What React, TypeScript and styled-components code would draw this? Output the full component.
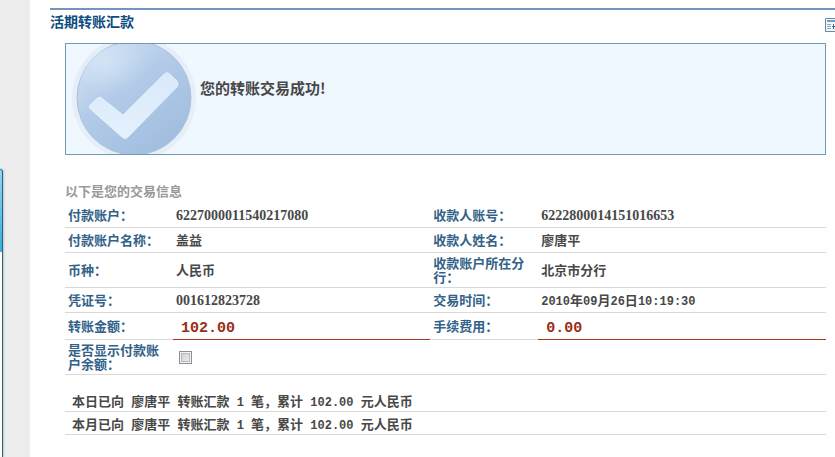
import React from "react";
import styled, { createGlobalStyle } from "styled-components";

const GlobalStyle = createGlobalStyle`
  * { box-sizing: border-box; }
  body {
    margin: 0;
    background: #fff;
    color: #484848;
    font: 700 13px/14px "Noto Sans CJK SC", sans-serif;
  }
`;

const Page = styled.div`
  display: flex;
  min-height: 100vh;
  overflow: hidden;
`;

const Rail = styled.aside`
  flex: 0 0 30px;
  display: flex;
  padding-top: 169px;
  background: #ededed;
`;

const DockedPanel = styled.div`
  width: 3px;
  border-top: 1px solid #2f6f90;
  border-right: 1px solid #315f7c;
  border-top-right-radius: 3px;
  background: linear-gradient(#8fd6f2, #35aee0 82px, #fff 82px);
  box-shadow: 0 0 3px #7fa3b4;
`;

const Main = styled.main`
  flex: 1;
  min-width: 0;
  padding: 8px 0 20px 20px;
`;

const Header = styled.header`
  display: flex;
  justify-content: space-between;
  height: 27px;
  border-top: 2px solid #7096bf;
`;

const Title = styled.h1`
  margin: 3px 0 0;
  font-size: 14px;
  line-height: 16px;
  color: #0d4c80;
`;

const HeaderIcon = styled.svg`
  margin-top: 8px;
`;

const Content = styled.div`
  padding: 8px 9px 0 15px;
`;

const Banner = styled.section`
  display: flex;
  height: 112px;
  border: 1px solid #6e9bb4;
  background: #eff7ff;
  overflow: hidden;
`;

const Message = styled.p`
  margin: 36px 0 0 2px;
  font-size: 15px;
  line-height: 16px;
`;

const SectionTitle = styled.h2`
  margin: 29px 0 5px;
  font-size: 13px;
  line-height: 14px;
  color: #999;
`;

const Details = styled.table`
  width: 100%;
  border-collapse: separate;
  border-spacing: 0;
  table-layout: fixed;
`;

const LabelCol = styled.col`
  width: 108px;
`;

const PayerCol = styled.col`
  width: 33.8%;
`;

const Row = styled.tr<{ $height: number }>`
  height: ${(p) => p.$height}px;
`;

const LabelCell = styled.th`
  padding: 0 8px 0 3px;
  border-bottom: 1px solid #d9d9d9;
  text-align: left;
  vertical-align: middle;
  color: #336289;
`;

const ValueCell = styled.td`
  padding: 0 3px;
  border-bottom: 1px solid #d9d9d9;
  vertical-align: middle;
`;

const AmountCell = styled.td`
  padding: 6px 8px 0;
  border-bottom: 1px solid #a83a20;
  vertical-align: middle;
  color: #9b2c14;
  font: 700 15px/16px "Liberation Mono", monospace;
`;

const AccountNumber = styled.span`
  font-family: "Liberation Serif", serif;
  font-size: 14px;
`;

const Mono = styled.span`
  font-family: "Liberation Mono", monospace;
  font-size: 12px;
  line-height: 10px;
  white-space: pre;
`;

const CheckBox = styled.input`
  appearance: none;
  display: block;
  width: 13px;
  height: 13px;
  margin: 0 0 0 3px;
  border: 1px solid #8e8f8f;
  background: linear-gradient(135deg, #c3c8d0, #f4f4f4);
  box-shadow: inset 0 0 0 1px #f4f4f4, inset 0 0 0 2px #b5b9bf;
  &:checked { background: #3f78a8; }
`;

const Totals = styled.ul`
  margin: 14px 0 0;
  padding: 0;
  list-style: none;
`;

const Total = styled.li`
  padding: 5px 7px 3px;
  border-bottom: 1px solid #d9d9d9;
`;

function SuccessMark() {
  return (
    <svg width="132" height="110" viewBox="0 0 132 110" aria-hidden="true">
      <defs>
        <linearGradient id="disc" x1="0.1" y1="0.1" x2="0.7" y2="0.9">
          <stop offset="0" stopColor="#cfe0f3" />
          <stop offset="0.45" stopColor="#b3cbe8" />
          <stop offset="1" stopColor="#a3bfe0" />
        </linearGradient>
        <radialGradient id="shine" cx="0.3" cy="0.25" r="0.5">
          <stop offset="0" stopColor="#dceafa" stopOpacity="0.6" />
          <stop offset="1" stopColor="#d4e4f6" stopOpacity="0" />
        </radialGradient>
        <linearGradient id="tick" x1="0" y1="0" x2="0" y2="1">
          <stop offset="0" stopColor="#d8e9fa" />
          <stop offset="1" stopColor="#e5f1fd" />
        </linearGradient>
      </defs>
      <circle cx="68" cy="54" r="62" fill="#e6eef7" />
      <circle cx="68" cy="54" r="57" fill="url(#disc)" stroke="#abc3df" />
      <ellipse cx="56" cy="34" rx="42" ry="32" fill="url(#shine)" />
      <path
        d="M23 61 L31 53 Q33 51 36 53 L57 70 L98 29 Q101 26 104 29 L112 37 Q114 40 112 43 L62 94 Q59 97 56 94 L23 65 Q21 63 23 61Z"
        fill="url(#tick)"
        stroke="#93b1d4"
        strokeOpacity="0.5"
      />
    </svg>
  );
}

const accountRows = [
  {
    height: 25,
    left: ["付款账户：", <AccountNumber>6227000011540217080</AccountNumber>],
    right: ["收款人账号：", <AccountNumber>6222800014151016653</AccountNumber>],
  },
  { height: 25, left: ["付款账户名称：", "盖益"], right: ["收款人姓名：", "廖唐平"] },
  { height: 35, left: ["币种：", "人民币"], right: ["收款账户所在分行：", "北京市分行"] },
  {
    height: 25,
    left: ["凭证号：", <AccountNumber>001612823728</AccountNumber>],
    right: [
      "交易时间：",
      <>
        <Mono>2010</Mono>年<Mono>09</Mono>月<Mono>26</Mono>日<Mono>10:19:30</Mono>
      </>,
    ],
  },
];

const periods = ["本日已向", "本月已向"];

export default function App() {
  return (
    <Page>
      <GlobalStyle />
      <Rail>
        <DockedPanel />
      </Rail>
      <Main>
        <Header>
          <Title>活期转账汇款</Title>
          <HeaderIcon width="10" height="14" viewBox="0 0 10 14" aria-hidden="true">
            <path d="M10 .5H.5v13H10" fill="#f2f7fb" stroke="#6889a8" />
            <path d="M2 3h8" stroke="#6f9cc8" strokeWidth="2" />
            <path d="M2 6.5h4M2 8.5h4M2 10.5h4" stroke="#8fa9c2" />
            <path d="M7 8.5h3M8.5 6v5" stroke="#3f6fa0" />
          </HeaderIcon>
        </Header>
        <Content>
          <Banner>
            <SuccessMark />
            <Message>您的转账交易成功!</Message>
          </Banner>
          <SectionTitle>以下是您的交易信息</SectionTitle>
          <Details>
            <colgroup>
              <LabelCol />
              <PayerCol />
              <LabelCol />
              <col />
            </colgroup>
            <tbody>
              {accountRows.map((row, i) => (
                <Row key={i} $height={row.height}>
                  <LabelCell scope="row">{row.left[0]}</LabelCell>
                  <ValueCell>{row.left[1]}</ValueCell>
                  <LabelCell scope="row">{row.right[0]}</LabelCell>
                  <ValueCell>{row.right[1]}</ValueCell>
                </Row>
              ))}
              <Row $height={27}>
                <LabelCell scope="row">转账金额：</LabelCell>
                <AmountCell>102.00</AmountCell>
                <LabelCell scope="row">手续费用：</LabelCell>
                <AmountCell>0.00</AmountCell>
              </Row>
              <Row $height={35}>
                <LabelCell scope="row">
                  <label htmlFor="show-balance">是否显示付款账户余额：</label>
                </LabelCell>
                <ValueCell colSpan={3}>
                  <CheckBox id="show-balance" type="checkbox" />
                </ValueCell>
              </Row>
            </tbody>
          </Details>
          <Totals>
            {periods.map((period) => (
              <Total key={period}>
                {period}
                <Mono> </Mono>廖唐平<Mono> </Mono>转账汇款<Mono> 1 </Mono>笔，累计
                <Mono> 102.00 </Mono>元人民币
              </Total>
            ))}
          </Totals>
        </Content>
      </Main>
    </Page>
  );
}
